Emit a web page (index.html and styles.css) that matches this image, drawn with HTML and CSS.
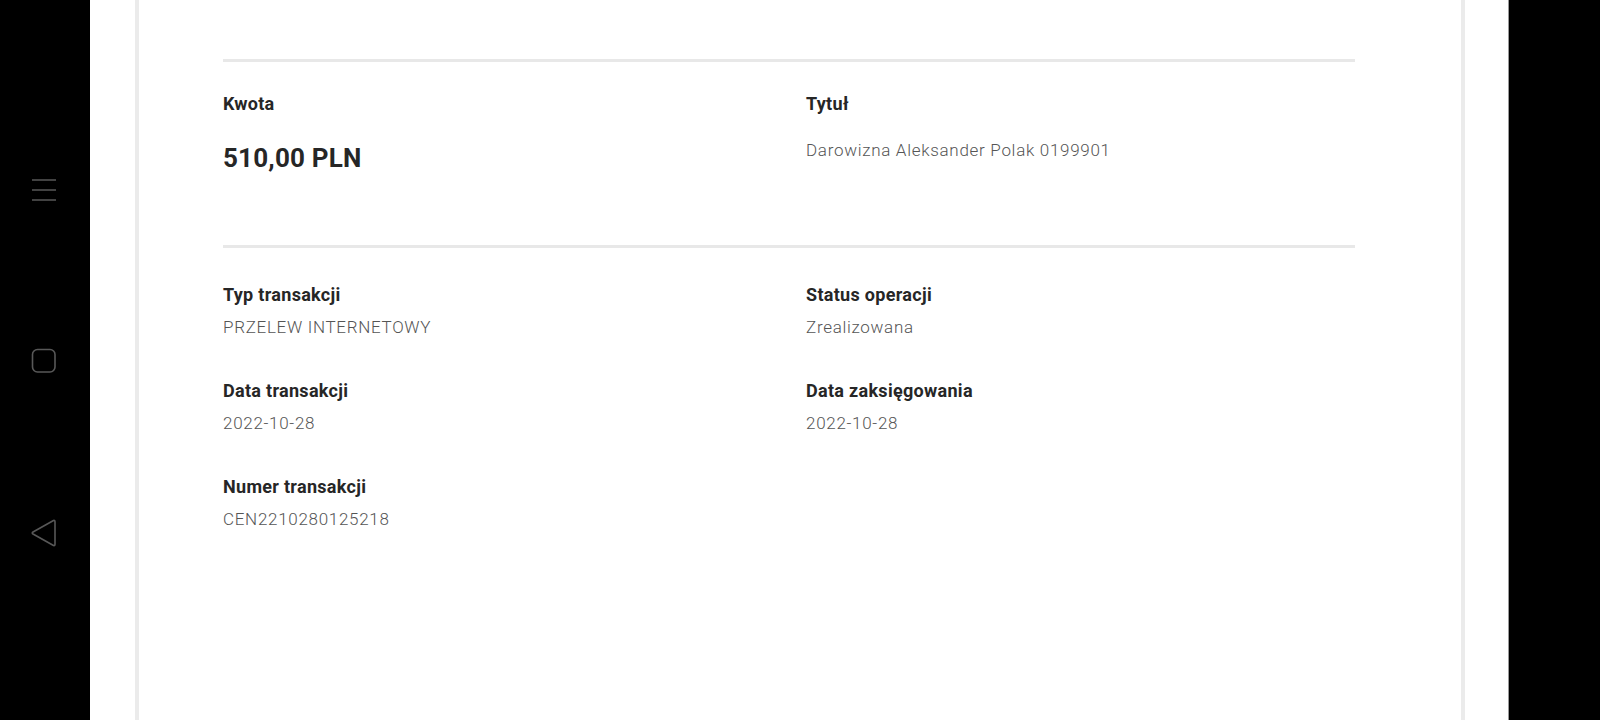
FILE: index.html
```html
<!DOCTYPE html>
<html lang="pl">
<head>
<meta charset="utf-8">
<title>Szczegóły transakcji</title>
<link rel="stylesheet" href="styles.css">
</head>
<body>
<div class="screen">
  <nav class="navbar">
    <svg class="nav-icon" width="26" height="24" viewBox="0 0 26 24"><path d="M1 3h24M1 13h24M1 23h24" stroke="#585858" stroke-width="1.6" fill="none"/></svg>
    <svg class="nav-icon" width="26" height="26" viewBox="0 0 26 26"><rect x="1.5" y="1.5" width="22.5" height="22.5" rx="5" stroke="#585858" stroke-width="1.6" fill="none"/></svg>
    <svg class="nav-icon" width="28" height="30" viewBox="0 0 28 30"><path d="M23.5 2.5 Q25 2 25 4 L25 26 Q25 28 23.5 27.5 L3 16 Q1.5 15 3 14 Z" stroke="#585858" stroke-width="1.6" fill="none" stroke-linejoin="round"/></svg>
  </nav>
  <main class="main">
    <div class="card">
      <section class="section section-top">
        <div class="field">
          <div class="label">Kwota</div>
          <div class="amount">510,00 PLN</div>
        </div>
        <div class="field">
          <div class="label">Tytuł</div>
          <div class="value">Darowizna Aleksander Polak 0199901</div>
        </div>
      </section>
      <section class="section section-details">
        <div class="field">
          <div class="label">Typ transakcji</div>
          <div class="value">PRZELEW INTERNETOWY</div>
        </div>
        <div class="field">
          <div class="label">Status operacji</div>
          <div class="value">Zrealizowana</div>
        </div>
        <div class="field">
          <div class="label">Data transakcji</div>
          <div class="value">2022-10-28</div>
        </div>
        <div class="field">
          <div class="label">Data zaksięgowania</div>
          <div class="value">2022-10-28</div>
        </div>
        <div class="field">
          <div class="label">Numer transakcji</div>
          <div class="value">CEN2210280125218</div>
        </div>
      </section>
    </div>
  </main>
  <div class="side-black"></div>
</div>
</body>
</html>
```
FILE: styles.css
```css
* { box-sizing: border-box; }
html, body {
  margin: 0;
  padding: 0;
  background: #000;
  height: 720px;
  overflow: hidden;
}
.screen {
  display: flex;
  height: 720px;
  font-family: Roboto, "Liberation Sans", sans-serif;
}
.navbar {
  width: 90px;
  flex: 0 0 90px;
  background: #000;
  display: flex;
  flex-direction: column;
  align-items: flex-start;
  padding-left: 31px;
  padding-top: 177px;
}
.nav-icon { display: block; }
.navbar .nav-icon:nth-child(2) { margin-top: 147px; margin-left: 0; }
.navbar .nav-icon:nth-child(3) { margin-top: 144px; margin-left: -1px; }
.main {
  flex: 0 0 1418px;
  background: #fff;
  padding-left: 45px;
}
.card {
  width: 1330px;
  height: 720px;
  border-left: 4px solid #ebebeb;
  border-right: 4px solid #ebebeb;
  padding: 59px 106px 0 84px;
}
.side-black {
  flex: 1;
  background: #000;
  border-left: 1px solid #9a9a9a;
}
.section {
  border-top: 3px solid #e8e8e8;
  display: grid;
  grid-template-columns: 549px 549px;
  column-gap: 34px;
}
.section-top {
  padding-top: 30px;
  padding-bottom: 69px;
}
.section-top .label { margin-bottom: 24px; }
.section-top .value { margin-top: -2px; }
.section-details {
  padding-top: 35px;
  row-gap: 40px;
}
.section-details .label { margin-bottom: 8px; }
.label {
  font-size: 18px;
  line-height: 24px;
  font-weight: 700;
  letter-spacing: 0.3px;
  color: #262626;
}
.value {
  font-size: 17px;
  line-height: 24px;
  font-weight: 300;
  color: #555;
  letter-spacing: 0.7px;
}
.amount {
  font-size: 26px;
  line-height: 36px;
  font-weight: 700;
  letter-spacing: 0.2px;
  color: #262626;
}
```
